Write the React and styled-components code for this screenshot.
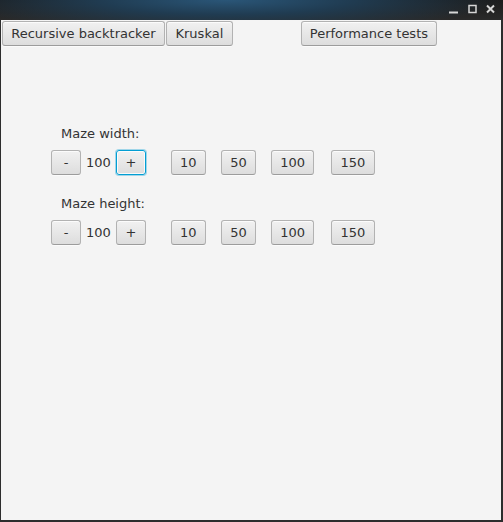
import styled, { createGlobalStyle, css } from "styled-components"

const GlobalStyle = createGlobalStyle`
  html, body {
    margin: 0;
    padding: 0;
    background: #2d2d2d;
  }
`

const Window = styled.div`
  width: 503px;
  height: 522px;
  display: flex;
  flex-direction: column;
  background: #2d2d2d;
  font-family: "DejaVu Sans", "Liberation Sans", sans-serif;
  font-size: 13px;
  color: #333;
`

const TitleBar = styled.div`
  height: 20px;
  flex: none;
  display: flex;
  align-items: flex-start;
  justify-content: flex-end;
  padding-right: 8px;
  gap: 9px;
  background:
    radial-gradient(ellipse 55% 160% at 45% 0%, #2a5678 0%, #203c52 45%, rgba(34, 34, 34, 0) 100%),
    linear-gradient(to bottom, #1c1c1c, #2a2a2a);
`

const WinIcon = styled.svg`
  margin-top: 4px;
  display: block;
`

const Content = styled.div`
  flex: 1;
  margin: 0 2px 2px 1px;
  background: #f4f4f4;
`

const TopBar = styled.div`
  display: flex;
  gap: 1.5px;
  padding: 1px 0 0 1px;
`

const Spacer = styled.div`
  width: ${(p) => p.$w}px;
`

const Button = styled.button`
  font: inherit;
  color: #333;
  height: 25px;
  line-height: 15px;
  padding: 4px 8.25px;
  ${(p) => p.$w && css`width: ${p.$w}px;`}
  margin-left: ${(p) => p.$shift || 0}px;
  border: 1px solid #b2b2b2;
  border-bottom-color: #9c9c9c;
  border-radius: 3px;
  background: linear-gradient(to bottom, #f1f1f1, #dddddd);
  box-shadow: inset 0 1px 0 rgba(255, 255, 255, 0.75), 0 1px 0 rgba(255, 255, 255, 0.6);
  cursor: pointer;
  white-space: nowrap;
  ${(p) =>
    p.$focused &&
    css`
      border-color: #039ed3;
      box-shadow: inset 0 0 0 1px rgba(255, 255, 255, 0.8), 0 0 0 1px rgba(3, 158, 211, 0.35);
    `}
`

const Panel = styled.div`
  padding: 80px 0 0 50px;
  display: flex;
  flex-direction: column;
`

const Section = styled.div`
  display: flex;
  flex-direction: column;
  gap: 9px;
  & + & {
    margin-top: 21px;
  }
`

const FieldLabel = styled.div`
  line-height: 15px;
  margin-left: 10px;
`

const Row = styled.div`
  display: flex;
  align-items: center;
`

const Stepper = styled.div`
  display: flex;
  align-items: center;
  gap: 5px;
`

const Value = styled.span`
  line-height: 15px;
`

const Presets = styled.div`
  display: flex;
  gap: 15px;
  margin-left: 25px;
`

const presets = [10, 50, 100, 150]

const SizeField = ({ label, value, focused }) => (
  <Section>
    <FieldLabel>{label}</FieldLabel>
    <Row>
      <Stepper>
        <Button $w={30}>-</Button>
        <Value>{value}</Value>
        <Button $w={30} $focused={focused}>+</Button>
      </Stepper>
      <Presets>
        {presets.map((n, i) => (
          <Button key={n} $shift={i === 3 ? 2 : 0}>{n}</Button>
        ))}
      </Presets>
    </Row>
  </Section>
)

const App = () => {
  return (
    <Window>
      <GlobalStyle />
      <TitleBar>
        <WinIcon width="10" height="12" viewBox="0 0 10 12">
          <rect x="0" y="7.5" width="9" height="2" fill="#d6d6d6" />
        </WinIcon>
        <WinIcon width="9" height="12" viewBox="0 0 9 12">
          <rect x="1" y="1.5" width="7" height="7" fill="none" stroke="#d6d6d6" strokeWidth="1.5" />
        </WinIcon>
        <WinIcon width="9" height="12" viewBox="0 0 9 12">
          <path d="M1 1.5 L8 8.5 M8 1.5 L1 8.5" stroke="#d6d6d6" strokeWidth="2" />
        </WinIcon>
      </TitleBar>
      <Content>
        <TopBar>
          <Button>Recursive backtracker</Button>
          <Button>Kruskal</Button>
          <Spacer $w={65} />
          <Button>Performance tests</Button>
        </TopBar>
        <Panel>
          <SizeField label="Maze width:" value={100} focused />
          <SizeField label="Maze height:" value={100} />
        </Panel>
      </Content>
    </Window>
  )
}

export default App
